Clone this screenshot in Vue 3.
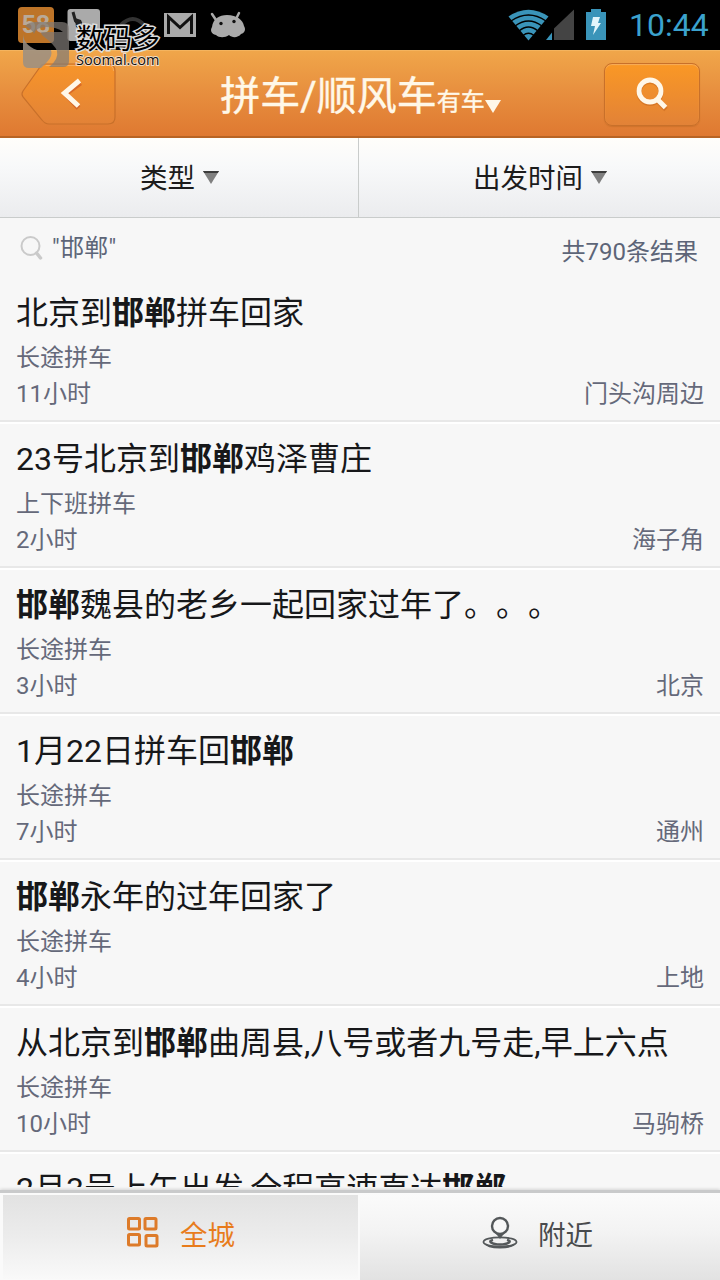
<script setup>
const kw = '邯郸'
const rows = [
  { a: '北京到', b: '拼车回家', type: '长途拼车', time: '11小时', place: '门头沟周边' },
  { a: '23号北京到', b: '鸡泽曹庄', type: '上下班拼车', time: '2小时', place: '海子角' },
  { a: '', b: '魏县的老乡一起回家过年了。。。', type: '长途拼车', time: '3小时', place: '北京' },
  { a: '1月22日拼车回', b: '', type: '长途拼车', time: '7小时', place: '通州' },
  { a: '', b: '永年的过年回家了', type: '长途拼车', time: '4小时', place: '上地' },
  { a: '从北京到', b: '曲周县,八号或者九号走,早上六点', type: '长途拼车', time: '10小时', place: '马驹桥' },
]
const last = '2月3号上午出发,全程高速直达'
const filters = ['类型', '出发时间']
</script>

<template>
  <div class="screen">
    <div class="status">
      <svg class="notify" width="250" height="50" viewBox="0 0 250 50">
        <rect x="18" y="7" width="36" height="36" rx="4" fill="#bd7428" />
        <text x="36" y="33" class="logo58">58</text>
        <rect x="67.500" y="9" width="32.500" height="32" rx="3" fill="#aaa" />
        <path d="M73 12l2.500 9 9 9" stroke="#222" stroke-width="3" fill="none" /><path d="M75 18l6 2 4 10-9-3z" fill="#222" />
        <path d="M121 25q12-12 23 0" stroke="#333" stroke-width="4" fill="none" />
        <rect x="164" y="13" width="32" height="24" fill="#aaa" />
        <path d="M168.500 34V17L180 27.500 191.500 17v17" stroke="#111" stroke-width="3" fill="none" />
        <path d="M212 14l4 6M239 13l-3 6" stroke="#aaa" stroke-width="2.500" stroke-linecap="round" />
        <path d="M212 27c1-8 7-12 15-12 10 0 16 5 17 11 2 3 1 7-3 8-3 4-9 4-12 1-4 3-10 3-13 0-5-1-6-5-4-8z" fill="#aaa" />
        <circle cx="221" cy="23.500" r="1.700" fill="#111" /><circle cx="234" cy="21.500" r="1.700" fill="#111" />
      </svg>
      <svg class="system" width="108" height="50" viewBox="504 0 108 50">
        <path d="M528.500 40.500L508.500 16.500Q528.500 3 548.500 16.500Z" fill="#3a94b9" />
        <g fill="none" stroke="#000" stroke-width="1.400">
          <path d="M511 21Q528.500 9 546 21M515 26Q528.500 16 542 26M519 31Q528.500 23 538 31M523 35.500Q528.500 31 534 35.500" />
        </g>
        <path d="M554 28.500L574 9.500V40H554z" fill="#444" />
        <path d="M546 40l6-7.500V40z" fill="#3a94b9" />
        <path d="M586 12h5V9h10v3h5v28h-20z" fill="#3a94b9" />
        <path d="M593 17h7l-2 6h3l-8 12 2-9h-4z" fill="#e3f5fb" />
      </svg>
      <span class="clock">10:44</span>
    </div>

    <header class="header">
      <svg class="back" width="100" height="68" viewBox="0 0 100 68">
        <defs><linearGradient id="btn" x1="0" y1="0" x2="0" y2="1"><stop offset="0" stop-color="#f7952a" /><stop offset="1" stop-color="#e28237" /></linearGradient></defs>
        <path d="M25 4h63q7 0 7 7v46q0 7-7 7H29q-4 0-7-4L3 37q-2-3 0-6L20 7q2-3 5-3z" fill="url(#btn)" stroke="#c8702a" stroke-width="1.200" />
        <path d="M25.500 5.500H88q5.500 0 5.500 5.500" fill="none" stroke="#f7ad5b" stroke-width="1" />
        <path d="M60.500 22L45.500 33l13 14" fill="none" stroke="#c0411b" stroke-width="5" opacity=".45" transform="translate(0 1)" />
        <path d="M59.500 20.500L44.500 33 58.500 46" fill="none" stroke="#fff7e8" stroke-width="5" />
      </svg>
      <h1 class="title">拼车/顺风车<small>有车</small><i class="caret"></i></h1>
      <button class="search">
        <svg width="36" height="38" viewBox="0 0 36 38" fill="none">
          <g stroke="#c0611b" opacity=".45" transform="translate(0 1.500)"><circle cx="16" cy="16" r="11" stroke-width="5" /><path d="M24 25l8 8" stroke-width="5" /></g>
          <circle cx="16" cy="16" r="11" stroke="#fff7e8" stroke-width="4.800" /><path d="M23.500 24.500l8 8" stroke="#fff7e8" stroke-width="5" />
        </svg>
      </button>
    </header>

    <nav class="filters">
      <div v-for="f in filters" :key="f" class="filter">
        <span>{{ f }}</span>
        <svg width="16" height="13" viewBox="0 0 16 13"><path d="M0 0h16L8 13z" fill="#808080" /><path d="M0 0h16l-1.200 2H1.200z" fill="#3c3c3c" /></svg>
      </div>
    </nav>

    <main class="content">
      <div class="summary">
        <svg width="24" height="26" viewBox="0 0 24 26" fill="none" stroke="#cacaca"><circle cx="10.500" cy="11" r="9" stroke-width="2" /><path d="M16.500 18l4 5" stroke-width="3.500" stroke-linecap="round" /></svg>
        <span class="query">"{{ kw }}"</span>
        <span class="count">共790条结果</span>
      </div>
      <article v-for="(r, i) in rows" :key="i" class="row">
        <h2>{{ r.a }}<b>{{ kw }}</b>{{ r.b }}</h2>
        <p>{{ r.type }}</p>
        <p class="meta"><span>{{ r.time }}</span><span>{{ r.place }}</span></p>
      </article>
      <article class="row">
        <h2>{{ last }}<b>{{ kw }}</b></h2>
      </article>
    </main>

    <footer class="tabs">
      <div class="tab active">
        <svg width="34" height="34" viewBox="0 0 34 34" fill="none" stroke="#dd7b2a" stroke-width="3">
          <rect x="2.500" y="2.500" width="11" height="10.500" rx="1" /><rect x="19" y="2.500" width="11" height="10.500" rx="1" />
          <rect x="2.500" y="18.500" width="11" height="10.500" rx="1" /><rect x="20" y="19.500" width="11" height="10.500" rx="1" />
        </svg>
        <span>全城</span>
      </div>
      <div class="tab near">
        <svg width="36" height="34" viewBox="0 0 36 34" fill="none" stroke="#54585a">
          <ellipse cx="18" cy="26" rx="16.500" ry="4.700" stroke-width="1.800" />
          <path d="M1.500 27q3 5.500 16.500 5.500T34.500 27q-4 3-16.500 3T1.500 27z" fill="#54585a" stroke="none" />
          <path d="M11 23.800q-4 1-2 2.700 3 2 9 2t9-2q2-1.700-2-2.700" stroke-width="2.400" />
          <path d="M18 23l-4.500-6h9z" fill="#54585a" stroke="none" />
          <circle cx="18" cy="10" r="8" fill="#f8f8f8" stroke-width="2.400" />
        </svg>
        <span>附近</span>
      </div>
    </footer>

    <div class="mark">
      <svg width="46" height="46" viewBox="0 0 46 46">
        <path d="M0 11q0 12 14 17h14q2 6-4 12l-6 6H6q-6 0-6-6z" fill="#9a8f84" opacity=".85" />
        <path d="M2 4q4-4 10-4h27q7 0 7 7v32q0 6-6 6H26q10-8 8-16-2-6-14-15-4-4 0-4h20q-6-5-17-5-10 0-12 7Q9 7 2 4z" fill="#807b76" opacity=".7" />
      </svg>
      <div class="words"><span class="cn">数码多</span><span class="en">Soomal.com</span></div>
    </div>
  </div>
</template>

<style>
body { margin: 0; }
</style>

<style scoped>
* { box-sizing: border-box; }
.screen { position: relative; width: 720px; height: 1280px; overflow: hidden; display: flex; flex-direction: column; background: #f7f7f7; font-family: Roboto, "Noto Sans CJK SC", sans-serif; text-spacing-trim: space-all; }
.status { height: 50px; flex: none; background: #000; display: flex; align-items: center; }
.logo58 { font: bold 25px "Liberation Sans", sans-serif; fill: #b9aa98; text-anchor: middle; }
.system { margin-left: auto; }
.clock { width: 108px; padding-left: 17px; font-size: 32px; line-height: 52px; color: #3ba2cd; white-space: nowrap; }
.header { height: 88px; flex: none; display: flex; align-items: center; justify-content: space-between; padding: 1px 20px 0; background: linear-gradient(#f0a64a, #e78e3e 50%, #df7931); border-top: 1px solid #f4b45f; border-bottom: 2px solid #b86424; }
.title { margin: 10px 3px 0 0; font-size: 40px; line-height: 60px; font-weight: 400; color: #fff8e8; -webkit-text-stroke: .4px #fff8e8; white-space: nowrap; display: flex; align-items: baseline; }
.title small { font-size: 24px; }
.caret { border: 8px solid transparent; border-top: 13px solid #fff8e8; border-bottom: 0; align-self: flex-end; margin-bottom: 19px; }
.search { width: 96px; height: 63px; padding: 0; display: flex; align-items: center; justify-content: center; border: 1px solid #c8702a; border-radius: 8px; background: linear-gradient(#fa9825, #e28237); box-shadow: inset 0 1px 1px #f7ad5b, 0 1px 1px #c46d2799; }
.filters { height: 80px; flex: none; display: flex; background: linear-gradient(#fffefa, #f8f9fa 35%, #ebecee); border-bottom: 1px solid #c9cccb; }
.filter { flex: 1; display: flex; align-items: center; justify-content: center; gap: 8px; font-size: 27.5px; color: #1c1c1c; padding-left: 1px; }
.filter span { margin-top: -3px; }
.filter:first-child { flex: 0 0 359px; border-right: 1px solid #c9cccb; padding-left: 1px; }
.content { height: 969px; flex: none; overflow: hidden; }
.summary { height: 58px; display: flex; align-items: flex-start; padding: 0 22px 0 20px; font-size: 24px; line-height: 36px; color: #5d6578; }
.summary svg { margin-top: 17px; }
.query { margin: 12px 0 0 8px; letter-spacing: .3px; }
.count { margin: 16px 0 0 auto; }
.row { height: 146px; padding: 13px 16px 0; border-bottom: 2px solid #e8e8e8; box-shadow: 0 2px #fff; color: #65697a; font-size: 24px; }
.row h2 { margin: 0; font-size: 32px; line-height: 48px; font-weight: 400; color: #17181a; white-space: nowrap; }
.row p { margin: 3px 0 0; line-height: 36px; }
.row .meta { margin: 0; display: flex; justify-content: space-between; }
.tabs { margin-top: auto; height: 90px; display: flex; border-top: 3px solid #c9cacb; box-shadow: 0 -1px 3px #0002; background: #fff; }
.tab { flex: 1; display: flex; align-items: center; justify-content: center; font-size: 27.500px; color: #494b4d; gap: 20px; background: linear-gradient(#fbfbfb, #f3f3f3 45%, #e2e2e2); padding-bottom: 8px; }
.tab.active { flex: 0 0 360px; color: #e87c1c; background: linear-gradient(#e2e2e2, #ececec 50%, #f9f9f9); border: 3px solid #fafafa; border-width: 2px 2px 1px 3px; }
.tab.near { padding-right: 5px; }
.mark { position: absolute; left: 23px; top: 22px; display: flex; gap: 7px; }
.words { display: flex; flex-direction: column; white-space: nowrap; }
.cn { font: 28px/30px "Noto Sans CJK SC", sans-serif; color: #000; -webkit-text-stroke: 3px #ddd; paint-order: stroke fill; }
.en { font: 14.500px/16px "Open Sans", sans-serif; color: #111; -webkit-text-stroke: 2px #f1dcc5; paint-order: stroke fill; }
</style>
